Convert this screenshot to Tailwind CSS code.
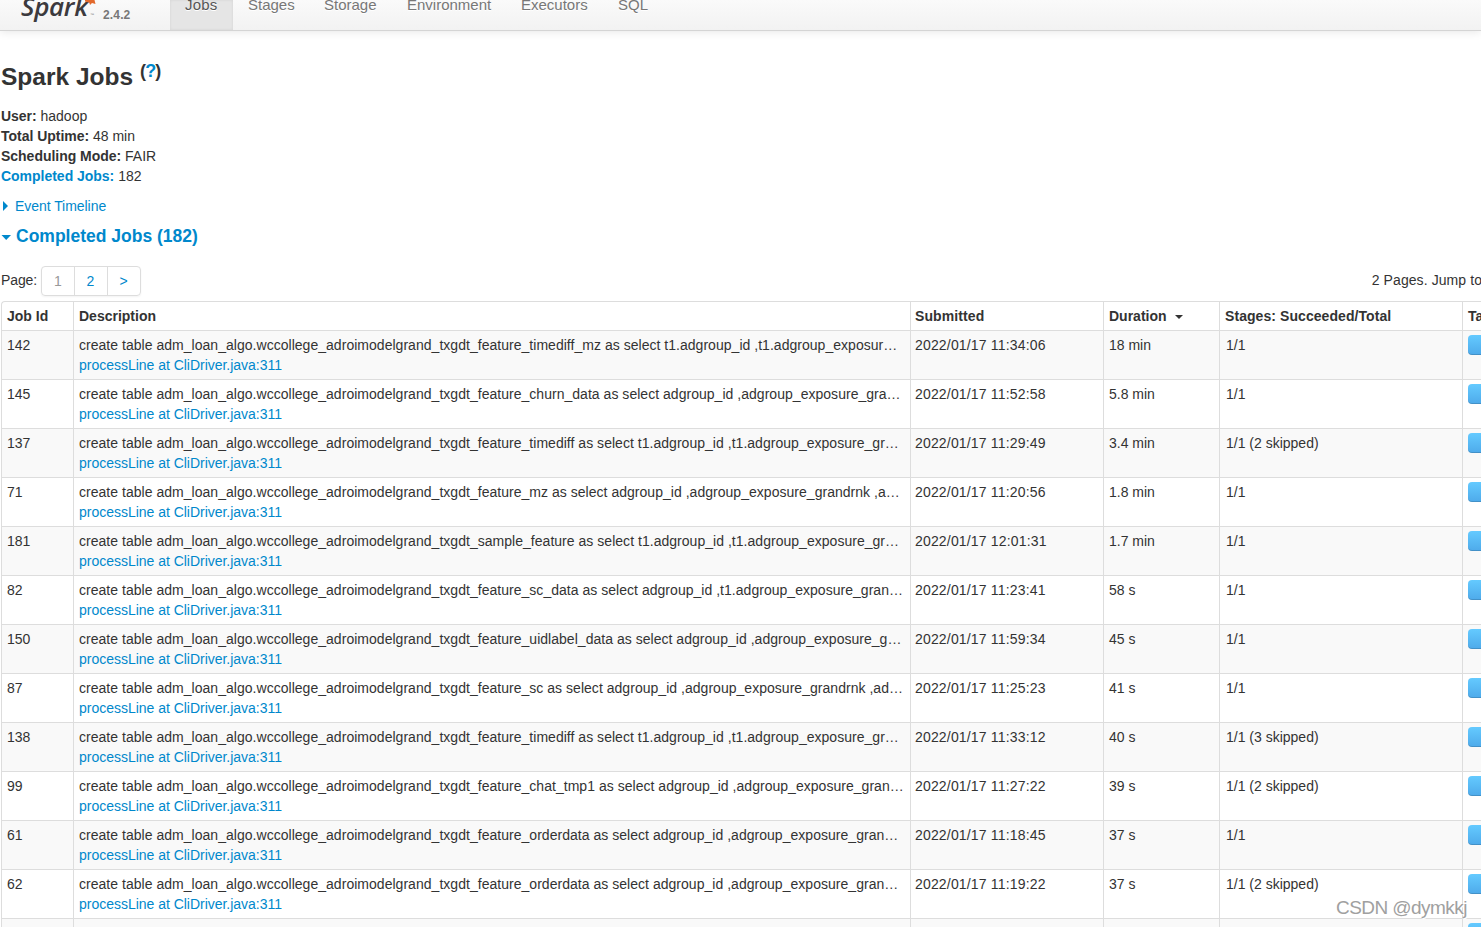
<!DOCTYPE html>
<html lang="en">
<head>
    <meta charset="UTF-8">
    <meta name="viewport" content="width=device-width, initial-scale=1.0">
    <title>Spark Jobs</title>
    <script src="https://cdn.jsdelivr.net/npm/@tailwindcss/browser@4"></script>
</head>
<body class="h-screen overflow-hidden bg-white font-['Liberation_Sans',Arial,sans-serif] text-[14px] leading-5 text-[#333]">
    <!-- Navbar, scrolled slightly past the top -->
    <div class="flex h-[31px] items-end border-b border-[#d4d4d4] bg-linear-to-b from-[#fafafa] to-[#f2f2f2] whitespace-nowrap shadow-[0_1px_10px_rgba(0,0,0,0.1)]">
        <div class="flex h-[30px] w-[170px] shrink-0 items-end pl-[21px]">
            <div class="relative h-[30px] w-[82px]">
                <span class="absolute left-0 -top-[9px] font-['Open_Sans',sans-serif] text-[26px] leading-[30px] font-semibold italic tracking-[-0.3px] text-[#3c3a3e]">Spark</span>
                <svg class="absolute left-[64px] top-0" width="11" height="7" viewBox="0 0 11 7"><path d="M0 0h9.500l1 4-3.500-1-2 2-.6-2.200L0 1.500z" fill="#e2692c"/></svg>
                <span class="absolute left-[69px] top-[12px] text-[4px] leading-[5px] text-[#777]">™</span>
            </div>
            <span class="pb-[5px] text-[12px] font-bold tracking-[0.15px] text-[#777]">2.4.2</span>
        </div>
        <div class="flex h-[30px] items-start text-[15px] text-[#777] text-shadow-[0_1px_0_#fff]">
            <a class="h-full w-[63px] bg-[#e5e5e5] pl-[15px] text-[#555] shadow-[inset_0_0_3px_rgba(0,0,0,0.08)]"><span class="-mt-[5px] block tracking-[0.2px]">Jobs</span></a>
            <a class="-mt-[5px] w-[76px] pl-[15px]">Stages</a>
            <a class="-mt-[5px] w-[83px] pl-[15px]">Storage</a>
            <a class="-mt-[5px] w-[114px] pl-[15px]">Environment</a>
            <a class="-mt-[5px] w-[97px] pl-[15px]">Executors</a>
            <a class="-mt-[5px] pl-[15px]">SQL</a>
        </div>
    </div>

    <div class="pl-px">
        <h3 class="mt-5 flex h-10 pt-[6px] text-[24.5px] leading-10 font-bold"><span>Spark Jobs</span><sup class="top-0 -mt-[6px] ml-[7px] text-[18px] leading-10 tracking-[-0.9px]">(<a class="text-[#08c]">?</a>)</sup></h3>
        <ul class="mt-[15px] tracking-[-0.02px]">
            <li><strong>User:</strong> hadoop</li>
            <li><strong>Total Uptime:</strong> 48 min</li>
            <li><strong>Scheduling Mode:</strong> FAIR</li>
            <li><strong class="text-[#08c]">Completed Jobs:</strong> 182</li>
        </ul>
        <div class="mt-[10px] flex items-center text-[#08c]">
            <svg class="mr-[7px] ml-[2px]" width="5" height="10" viewBox="0 0 5 10"><path d="M0 0l5 5-5 5z" fill="#08c"/></svg>
            <span class="tracking-[-0.05px]">Event Timeline</span>
        </div>
        <h4 class="mt-[10px] flex items-center text-[17.5px] font-bold text-[#08c]">
            <svg class="mt-[2px] mr-[5px]" width="10" height="5" viewBox="0 0 10 5"><path d="M.5 0h9.500l-4.800 5z" fill="#08c"/></svg>
            <span>Completed Jobs (182)</span>
        </h4>

        <div class="mt-5 flex h-[35px] items-start justify-between whitespace-nowrap">
            <div class="flex">
                <span class="mt-[4px] w-10 tracking-[-0.1px]">Page:</span>
                <div class="flex h-[30px] rounded border border-[#ddd] leading-7 text-[#08c] shadow-[0_1px_2px_rgba(0,0,0,0.05)]">
                    <span class="w-8 text-center text-[#999]">1</span>
                    <span class="w-[33px] border-l border-[#ddd] pr-px text-center">2</span>
                    <span class="w-[33px] border-l border-[#ddd] pr-px text-center">&gt;</span>
                </div>
            </div>
            <span class="mt-[4px] -mr-px tracking-[0.08px]">2 Pages. Jump to</span>
        </div>

        <div id="jobs" class="w-[1500px] rounded-tl border-t border-l border-[#ddd] whitespace-nowrap">
            <div class="grid h-7 grid-cols-[71px_837px_193px_116px_243px_1fr] leading-7 font-bold">
                <div class="pl-[5px]">Job Id</div>
                <div class="border-l border-[#ddd] pl-[5px]">Description</div>
                <div class="border-l border-[#ddd] pl-[4px] tracking-[0.1px]">Submitted</div>
                <div class="flex items-center border-l border-[#ddd] pl-[5px]">Duration
                    <svg class="mt-[2px] ml-[8px]" width="8" height="4" viewBox="0 0 8 4"><path d="M0 0h8l-4 4z" fill="#333"/></svg>
                </div>
                <div class="border-l border-[#ddd] pl-[5px] tracking-[0.07px]">Stages: Succeeded/Total</div>
                <div class="border-l border-[#ddd] pl-[5px]">Tasks</div>
            </div>
        </div>
    </div>

    <!-- Watermark -->
    <div class="absolute top-[896px] left-[1336px] text-[19px] leading-6 tracking-[-0.55px] text-[#a0a0a0] text-shadow-[1px_1px_0_#fff]">CSDN @dymkkj</div>

    <script>
        // id, feature suffix and query, submitted, duration, stages
        const jobs = [
            ['142', 'feature_timediff_mz as select t1.adgroup_id ,t1.adgroup_exposur…', '2022/01/17 11:34:06', '18 min', '1/1'],
            ['145', 'feature_churn_data as select adgroup_id ,adgroup_exposure_gra…', '2022/01/17 11:52:58', '5.8 min', '1/1'],
            ['137', 'feature_timediff as select t1.adgroup_id ,t1.adgroup_exposure_gr…', '2022/01/17 11:29:49', '3.4 min', '1/1 (2 skipped)'],
            ['71', 'feature_mz as select adgroup_id ,adgroup_exposure_grandrnk ,a…', '2022/01/17 11:20:56', '1.8 min', '1/1'],
            ['181', 'sample_feature as select t1.adgroup_id ,t1.adgroup_exposure_gr…', '2022/01/17 12:01:31', '1.7 min', '1/1'],
            ['82', 'feature_sc_data as select adgroup_id ,t1.adgroup_exposure_gran…', '2022/01/17 11:23:41', '58 s', '1/1'],
            ['150', 'feature_uidlabel_data as select adgroup_id ,adgroup_exposure_g…', '2022/01/17 11:59:34', '45 s', '1/1'],
            ['87', 'feature_sc as select adgroup_id ,adgroup_exposure_grandrnk ,ad…', '2022/01/17 11:25:23', '41 s', '1/1'],
            ['138', 'feature_timediff as select t1.adgroup_id ,t1.adgroup_exposure_gr…', '2022/01/17 11:33:12', '40 s', '1/1 (3 skipped)'],
            ['99', 'feature_chat_tmp1 as select adgroup_id ,adgroup_exposure_gran…', '2022/01/17 11:27:22', '39 s', '1/1 (2 skipped)'],
            ['61', 'feature_orderdata as select adgroup_id ,adgroup_exposure_gran…', '2022/01/17 11:18:45', '37 s', '1/1'],
            ['62', 'feature_orderdata as select adgroup_id ,adgroup_exposure_gran…', '2022/01/17 11:19:22', '37 s', '1/1 (2 skipped)'],
            ['', '', '', '', ''],
        ];

        document.getElementById('jobs').insertAdjacentHTML('beforeend', jobs.map(([id, query, submitted, duration, stages]) => `
            <div class="grid h-[49px] grid-cols-[71px_837px_193px_116px_243px_1fr] border-t border-[#ddd] odd:bg-white even:bg-[#f9f9f9] *:pt-1">
                <div class="pl-[5px]">${id}</div>
                <div class="border-l border-[#ddd] pl-[5px]">
                    ${id && `<div class="tracking-[0.03px]">create table adm_loan_algo.wccollege_adroimodelgrand_txgdt_${query}</div>
                    <a class="tracking-[-0.02px] text-[#08c]">processLine at CliDriver.java:311</a>`}
                </div>
                <div class="border-l border-[#ddd] pl-[4px] tracking-[0.17px]">${submitted}</div>
                <div class="border-l border-[#ddd] pl-[5px]">${duration}</div>
                <div class="border-l border-[#ddd] pl-[6px]">${stages}</div>
                <div class="border-l border-[#ddd] pl-[5px]"><div class="h-5 rounded bg-linear-to-b from-[#64caff] to-[#4eaaea] shadow-[inset_0_-1px_0_rgba(0,0,0,0.15)]"></div></div>
            </div>`).join(''));
    </script>
</body>
</html>
